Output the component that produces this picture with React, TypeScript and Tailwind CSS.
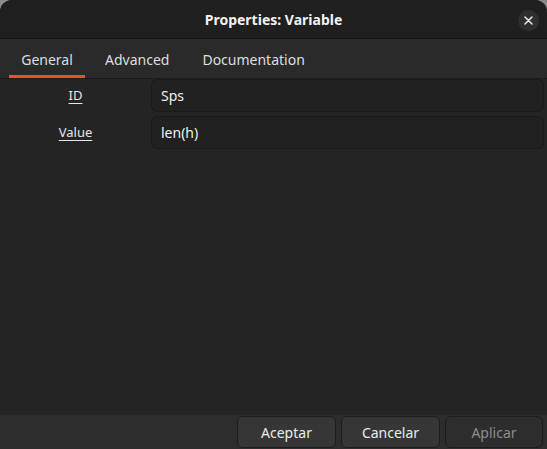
import React from "react";

export default function App() {
  const font = { fontFamily: '"Noto Sans", "Open Sans", sans-serif' };
  return (
    <div className="w-[547px] h-[449px] bg-[#8a8a8a] overflow-hidden" style={font}>
      <div className="w-full h-full flex flex-col rounded-t-[12px] overflow-hidden bg-[#242424]">
        {/* Title bar */}
        <div className="h-[39px] shrink-0 bg-[#1f1f1f] flex items-center justify-center relative border-b border-[#151515]">
          <span className="text-[14px] font-bold text-[#f2f2f2]">Properties: Variable</span>
          <div className="absolute right-[8px] top-[10px] w-[21px] h-[21px] rounded-full bg-[#2f2f2f] flex items-center justify-center">
            <svg width="9" height="9" viewBox="0 0 9 9">
              <path d="M1 1 L8 8 M8 1 L1 8" stroke="#e8e8e8" strokeWidth="1.5" strokeLinecap="round" />
            </svg>
          </div>
        </div>
        {/* Tabs */}
        <div className="h-[40px] shrink-0 bg-[#2a2a2a] border-b border-[#1c1c1c] flex items-end pl-[9px]">
          <div className="w-[76px] h-full flex flex-col items-center">
            <div className="flex-1 flex items-center pt-[4px] text-[14px] text-[#dedede]">General</div>
            <div className="h-[3px] w-full bg-[#e95420]" />
          </div>
          <div className="h-full flex items-center ml-[20px] text-[14px] text-[#dedede] pt-[1px]">Advanced</div>
          <div className="h-full flex items-center ml-[33px] text-[14px] text-[#dedede] pt-[1px]">Documentation</div>
        </div>
        {/* Content */}
        <div className="flex-1 bg-[#242424] flex flex-col gap-[4px] pr-[3px]">
          <div className="flex items-center">
            <div className="w-[151px] text-center text-[13px] text-[#e6e6e6] underline underline-offset-[3px]">ID</div>
            <div className="flex-1 h-[33px] rounded-[6px] bg-[#212121] border border-[#1a1a1a] flex items-center pl-[9px] text-[14px] text-[#f0f0f0]">Sps</div>
          </div>
          <div className="flex items-center">
            <div className="w-[151px] text-center text-[13px] text-[#e6e6e6] underline underline-offset-[3px]">Value</div>
            <div className="flex-1 h-[33px] rounded-[6px] bg-[#212121] border border-[#1a1a1a] flex items-center pl-[9px] text-[14px] text-[#f0f0f0]">len(h)</div>
          </div>
        </div>
        {/* Footer */}
        <div className="h-[34px] shrink-0 bg-[#2d2d2d] flex items-start justify-end gap-[5px] pr-[4px] pt-[1px]">
          <button className="w-[99px] h-[32px] rounded-[6px] bg-[#363636] border border-[#1c1c1c] text-[14px] text-[#ececec]">Aceptar</button>
          <button className="w-[99px] h-[32px] rounded-[6px] bg-[#363636] border border-[#1c1c1c] text-[14px] text-[#ececec]">Cancelar</button>
          <button className="w-[98px] h-[32px] rounded-[6px] bg-[#2d2d2d] border border-[#1c1c1c] text-[14px] text-[#8c8c8c]">Aplicar</button>
        </div>
      </div>
    </div>
  );
}
